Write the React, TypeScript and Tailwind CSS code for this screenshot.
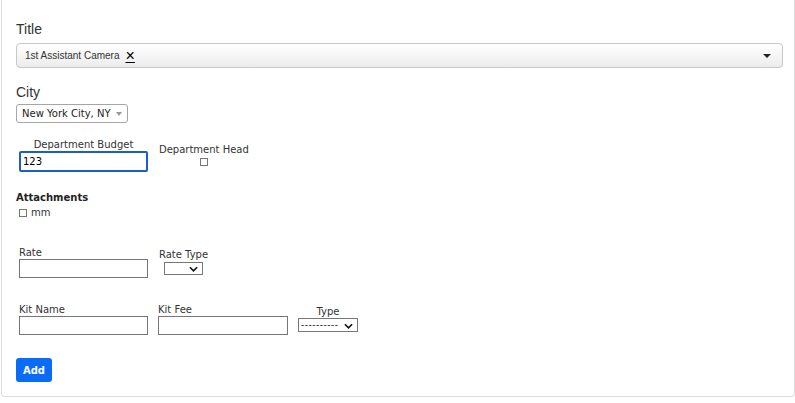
const verdana = "font-['DejaVu_Sans',Verdana,sans-serif]";

function Chevron({ className = '' }: { className?: string }) {
  return (
    <svg viewBox="0 0 10 6" className={`pointer-events-none absolute ${className}`} width="9" height="6">
      <path d="M1 1l4 4 4-4" fill="none" stroke="#111" strokeWidth="1.8" />
    </svg>
  );
}

function TextBox({ width = 'w-[129px]', value = '', focused = false }: { width?: string; value?: string; focused?: boolean }) {
  return (
    <input
      defaultValue={value}
      className={`${width} px-[2px] text-[10px] text-black outline-none ${
        focused ? 'h-[21px] rounded-[2px] border-2 border-[#1a5fc4]' : 'h-[19px] border border-[#767676]'
      }`}
    />
  );
}

export default function App() {
  return (
    <div className={`h-[403px] w-[795px] overflow-hidden bg-white ${verdana}`}>
      <div className="ml-[1px] h-[397px] rounded-b-[4px] border border-t-0 border-[#dcdcdc] pl-[14px] pr-[11px] pt-[20px]">
        {/* title picker */}
        <div className="font-['Liberation_Sans',Arial,sans-serif] text-[14px] leading-[18px] text-[#333]">Title</div>
        <div className="mt-[5px] flex h-[25px] items-center rounded-[4px] border border-[#c8c8c8] bg-gradient-to-b from-white to-[#ececec] pl-[8px] pr-[10px] font-['Liberation_Sans',Arial,sans-serif] text-[10px] text-[#333]">
          <span>1st Assistant Camera</span>
          <span className="ml-[6px] text-[16px] font-light leading-none text-black underline decoration-1 underline-offset-1">×</span>
          <svg viewBox="0 0 8 4" width="8" height="4" className="ml-auto mr-[1px]">
            <path d="M0 0h8L4 4z" fill="#222" />
          </svg>
        </div>

        {/* city */}
        <div className="mt-[15px] font-['Liberation_Sans',Arial,sans-serif] text-[14px] leading-[18px] text-[#333]">City</div>
        <div className="mt-[3px] flex h-[19px] w-[112px] items-center rounded-[3px] border border-[#a5a5a5] bg-white pl-[5px] pr-[5px] text-[10px] text-[#222]">
          <span>New York City, NY</span>
          <svg viewBox="0 0 6 4" width="6" height="4" className="ml-auto">
            <path d="M0 0h6L3 4z" fill="#999" />
          </svg>
        </div>

        {/* budget / head */}
        <div className="mt-[15px] flex items-start pl-[3px] text-[10px] text-[#333]">
          <div className="flex w-[129px] flex-col items-center">
            <span className="leading-[13px]">Department Budget</span>
            <TextBox value="123" focused width="w-[129px]" />
          </div>
          <div className="ml-[11px] mt-[5px] flex flex-col items-center">
            <span className="leading-[13px]">Department Head</span>
            <span className="mt-[2px] h-[8px] w-[8px] border border-[#777] bg-white" />
          </div>
        </div>

        {/* attachments */}
        <div className="mt-[19px] text-[10px] font-bold leading-[13px] text-[#222]">Attachments</div>
        <label className="mt-[2px] flex items-center pl-[3px] text-[10px] leading-[13px] text-[#333]">
          <span className="mr-[4px] h-[8px] w-[8px] border border-[#777] bg-white" />
          mm
        </label>

        {/* rate */}
        <div className="mt-[27px] flex items-start pl-[3px] text-[10px] text-[#333]">
          <div className="flex flex-col">
            <span className="leading-[13px]">Rate</span>
            <div>
              <TextBox />
            </div>
          </div>
          <div className="ml-[11px] mt-[2px] flex flex-col">
            <span className="leading-[13px]">Rate Type</span>
            <div className="relative ml-[5px] mt-[1px] h-[13px] w-[39px] border border-[#767676] bg-white">
              <Chevron className="right-[4px] top-[3px]" />
            </div>
          </div>
        </div>

        {/* kit */}
        <div className="mt-[25px] flex items-start pl-[3px] text-[10px] text-[#333]">
          <div className="flex flex-col">
            <span className="leading-[13px]">Kit Name</span>
            <div>
              <TextBox />
            </div>
          </div>
          <div className="ml-[10px] flex flex-col">
            <span className="leading-[13px]">Kit Fee</span>
            <div>
              <TextBox width="w-[130px]" />
            </div>
          </div>
          <div className="ml-[10px] mt-[2px] flex w-[60px] flex-col items-center">
            <span className="leading-[13px]">Type</span>
            <div className="relative flex h-[14px] w-[60px] items-center border border-[#767676] bg-white pl-[2px] text-[9px] tracking-[0.5px] leading-none text-black">
              ----------
              <Chevron className="right-[4px] top-[4px]" />
            </div>
          </div>
        </div>

        <button
          type="button"
          className="mt-[23px] h-[24px] w-[36px] rounded-[3px] bg-[#0a6cf5] text-[10px] font-bold text-white"
        >
          Add
        </button>
      </div>
    </div>
  );
}
